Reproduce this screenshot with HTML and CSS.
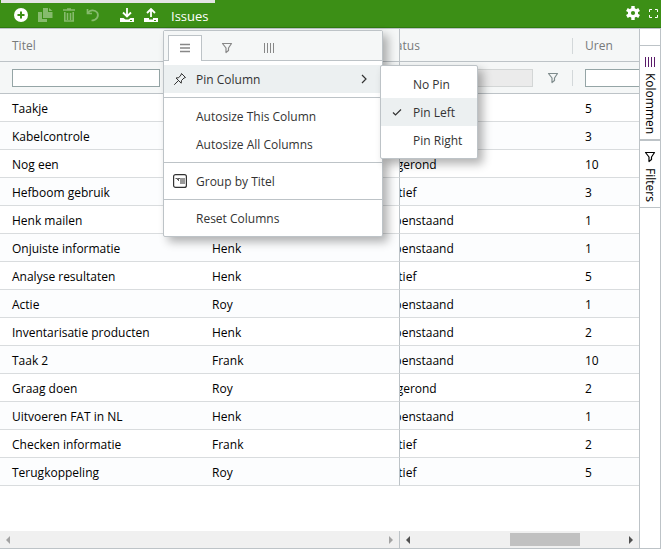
FILE: index.html
```html
<!DOCTYPE html>
<html lang="nl">
<head>
    <meta charset="UTF-8">
    <meta name="viewport" content="width=device-width, initial-scale=1.0">
    <title>Issues</title>
    <link rel="stylesheet" href="styles.css">
</head>
<body>
    <svg class="defs" width="0" height="0">
        <symbol id="filter" viewBox="0 0 12 12"><path d="M1.5 1.5h9L7.5 6v2.5L5 10.5V6z" fill="none" stroke="currentColor" stroke-width="1.2" stroke-linejoin="round"/></symbol>
        <symbol id="columns" viewBox="0 0 12 12"><path d="M1.5 1v10M4.5 1v10M7.5 1v10M10.5 1v10" stroke="currentColor"/></symbol>
    </svg>

    <header class="toolbar">
        <span class="progress"></span>
        <button type="button" class="tool" aria-label="Toevoegen">
            <svg width="14" height="14" viewBox="0 0 14 14"><circle cx="7" cy="7" r="7" fill="#fff"/><path d="M7 3.5v7M3.5 7h7" stroke="#3c8f16" stroke-width="2"/></svg>
        </button>
        <button type="button" class="tool" aria-label="Kopiëren" disabled>
            <svg width="15" height="14" viewBox="0 0 15 14" fill="currentColor"><path d="M0 4h4v7h5v3H0z"/><path d="M5 0h5v4h4.5v6H5z"/><path d="M11 0l3.5 3H11z"/></svg>
        </button>
        <button type="button" class="tool" aria-label="Verwijderen" disabled>
            <svg width="12" height="14" viewBox="0 0 12 14"><path d="M0 2h12M4 1h4" stroke="currentColor" stroke-width="1.6"/><path d="M1.8 4v9h8.4V4M4.5 5v7M7.5 5v7" fill="none" stroke="currentColor" stroke-width="1.6"/></svg>
        </button>
        <button type="button" class="tool" aria-label="Ongedaan maken" disabled>
            <svg width="14" height="14" viewBox="0 0 14 14" fill="none" stroke="currentColor" stroke-width="1.7"><path d="M1.500 1v4.500H6"/><path d="M2 5C4 1.500 9 1.500 11.200 4.500c2 3.500-.2 8-5.700 8"/></svg>
        </button>
        <button type="button" class="tool tool-wide" aria-label="Downloaden">
            <svg width="14" height="14" viewBox="0 0 14 14"><path d="M7 0v8M3 4.500l4 4 4-4" fill="none" stroke="#fff" stroke-width="1.8"/><path d="M0 10h3.500l2 1.500h3l2-1.500H14v4H0z" fill="#fff"/><path d="M10 12.500h2" stroke="#3c8f16"/></svg>
        </button>
        <button type="button" class="tool" aria-label="Uploaden">
            <svg width="14" height="14" viewBox="0 0 14 14"><path d="M7 9V1.500M3 5l4-4 4 4" fill="none" stroke="#fff" stroke-width="1.8"/><path d="M0 10h5v1.500h4V10h5v4H0z" fill="#fff"/><path d="M10 12.500h2" stroke="#3c8f16"/></svg>
        </button>
        <h1>Issues</h1>
        <div class="toolbar-right">
            <button type="button" aria-label="Instellingen">
                <svg width="14" height="14" viewBox="0 0 14 14"><path d="M7 0v14M.9 3.500l12.200 7M.9 10.500l12.200-7" stroke="#fff" stroke-width="3.400"/><circle cx="7" cy="7" r="3.600" fill="none" stroke="#fff" stroke-width="3"/><circle cx="7" cy="7" r="2.100" fill="#3c8f16"/></svg>
            </button>
            <button type="button" aria-label="Volledig scherm">
                <svg width="9" height="9" viewBox="0 0 9 9"><path d="M.5 3V.5H3M6 .5h2.500V3M8.500 6v2.500H6M3 8.500H.5V6" fill="none" stroke="#fff"/></svg>
            </button>
        </div>
    </header>

    <main class="grid">
        <section class="pane pane-pinned">
            <table>
                <thead>
                    <tr><th scope="col">Titel</th><td></td></tr>
                    <tr class="filters">
                        <td><input type="text" aria-label="Filter Titel"></td>
                        <td></td>
                    </tr>
                </thead>
                <tbody>
                    <tr><td>Taakje</td><td></td></tr>
                    <tr><td>Kabelcontrole</td><td></td></tr>
                    <tr><td>Nog een</td><td></td></tr>
                    <tr><td>Hefboom gebruik</td><td></td></tr>
                    <tr><td>Henk mailen</td><td></td></tr>
                    <tr><td>Onjuiste informatie</td><td>Henk</td></tr>
                    <tr><td>Analyse resultaten</td><td>Henk</td></tr>
                    <tr><td>Actie</td><td>Roy</td></tr>
                    <tr><td>Inventarisatie producten</td><td>Henk</td></tr>
                    <tr><td>Taak 2</td><td>Frank</td></tr>
                    <tr><td>Graag doen</td><td>Roy</td></tr>
                    <tr><td>Uitvoeren FAT in NL</td><td>Henk</td></tr>
                    <tr><td>Checken informatie</td><td>Frank</td></tr>
                    <tr><td>Terugkoppeling</td><td>Roy</td></tr>
                </tbody>
            </table>
            <div class="scrollbar scrollbar-off">
                <span class="arrow arrow-left"></span>
                <span class="arrow arrow-right"></span>
            </div>
        </section>

        <section class="pane pane-center">
            <table>
                <thead>
                    <tr><th scope="col"><div class="split">Status</div></th><th scope="col">Uren</th></tr>
                    <tr class="filters">
                        <td>
                            <div class="split">
                                <input type="text" aria-label="Filter Status" disabled>
                                <button type="button" class="filter-button" aria-label="Filter"><svg width="12" height="12"><use href="#filter"/></svg></button>
                            </div>
                        </td>
                        <td><input type="text" aria-label="Filter Uren"></td>
                    </tr>
                </thead>
                <tbody>
                    <tr><td></td><td>5</td></tr>
                    <tr><td></td><td>3</td></tr>
                    <tr><td>Afgerond</td><td>10</td></tr>
                    <tr><td>Actief</td><td>3</td></tr>
                    <tr><td>Openstaand</td><td>1</td></tr>
                    <tr><td>Openstaand</td><td>1</td></tr>
                    <tr><td>Actief</td><td>5</td></tr>
                    <tr><td>Openstaand</td><td>1</td></tr>
                    <tr><td>Openstaand</td><td>2</td></tr>
                    <tr><td>Openstaand</td><td>10</td></tr>
                    <tr><td>Afgerond</td><td>2</td></tr>
                    <tr><td>Openstaand</td><td>1</td></tr>
                    <tr><td>Actief</td><td>2</td></tr>
                    <tr><td>Actief</td><td>5</td></tr>
                </tbody>
            </table>
            <div class="scrollbar">
                <span class="arrow arrow-left"></span>
                <span class="thumb"></span>
                <span class="arrow arrow-right"></span>
            </div>
        </section>

        <aside class="sidebar">
            <button type="button"><svg width="12" height="12" class="purple"><use href="#columns"/></svg>Kolommen</button>
            <button type="button"><svg width="12" height="12"><use href="#filter"/></svg>Filters</button>
        </aside>
    </main>

    <div class="menu column-menu">
        <div class="menu-tabs">
            <button type="button" class="active" aria-label="Algemeen"><svg width="12" height="12" viewBox="0 0 12 12"><path d="M1 2.500h10M1 6h10M1 9.500h10" stroke="currentColor" stroke-width="1.500"/></svg></button>
            <button type="button" aria-label="Filter"><svg width="12" height="12"><use href="#filter"/></svg></button>
            <button type="button" aria-label="Kolommen"><svg width="12" height="12"><use href="#columns"/></svg></button>
        </div>
        <div class="menu-list">
            <button type="button" class="option active">
                <span class="option-icon"><svg width="14" height="14" viewBox="0 0 14 14" fill="none" stroke="currentColor" stroke-linejoin="round"><path d="M8.500 1.500l4 4-1.500.5-2.500 2.500-.3 2.700L3 6l2.700-.3L8 3z"/><path d="M5.200 8.800L1.500 12.500" stroke-linecap="round"/></svg></span>
                <span class="label">Pin Column</span>
                <svg class="chevron" width="8" height="10" viewBox="0 0 8 10"><path d="M2 1l4 4-4 4" fill="none" stroke="currentColor" stroke-width="1.200"/></svg>
            </button>
            <hr>
            <button type="button" class="option"><span class="option-icon"></span><span class="label">Autosize This Column</span></button>
            <button type="button" class="option"><span class="option-icon"></span><span class="label">Autosize All Columns</span></button>
            <hr>
            <button type="button" class="option">
                <span class="option-icon"><svg width="14" height="14" viewBox="0 0 14 14" fill="none" stroke="currentColor"><rect x=".6" y=".6" width="12.800" height="12.800" rx="2" stroke-width="1.200"/><path d="M2.500 4.500h2v1.500M5.500 4v3" stroke-width=".8"/><path d="M6 4.500h6M7 9.500h5" stroke-width=".8"/><path d="M9.500 4v6" stroke="#999" stroke-width="5"/></svg></span>
                <span class="label">Group by Titel</span>
            </button>
            <hr>
            <button type="button" class="option"><span class="option-icon"></span><span class="label">Reset Columns</span></button>
        </div>
    </div>

    <div class="menu pin-menu">
        <div class="menu-list">
            <button type="button" class="option"><span class="option-icon"></span><span class="label">No Pin</span></button>
            <button type="button" class="option active">
                <span class="option-icon"><svg width="10" height="10" viewBox="0 0 10 10"><path d="M1 5.500l2.500 2.500L9 2.500" fill="none" stroke="currentColor" stroke-width="1.200"/></svg></span>
                <span class="label">Pin Left</span>
            </button>
            <button type="button" class="option"><span class="option-icon"></span><span class="label">Pin Right</span></button>
        </div>
    </div>
</body>
</html>
```

FILE: styles.css
```css
* {
    box-sizing: border-box;
}
body {
    margin: 0;
    height: 100vh;
    display: flex;
    flex-direction: column;
    font-family: "Open Sans", "Noto Sans", sans-serif;
    font-size: 12px;
    line-height: 16px;
    color: #000;
    background: #fff;
    overflow: hidden;
}
button {
    padding: 0;
    border: none;
    background: none;
    font: inherit;
    color: inherit;
    cursor: pointer;
}
svg {
    display: block;
}
.defs {
    position: absolute;
}

/* toolbar */
.toolbar {
    position: relative;
    flex: none;
    display: flex;
    align-items: center;
    height: 28px;
    padding: 3px 3px 0 9px;
    background: #3c8f16;
    border-bottom: 1px solid #2f7a10;
    color: #fff;
}
.progress {
    position: absolute;
    top: 0;
    left: 1px;
    width: 214px;
    height: 3px;
    background: #e4e4e4;
}
.tool {
    width: 24px;
    display: flex;
    justify-content: center;
}
.tool:disabled {
    color: #86bb6d;
}
.tool-wide {
    margin-left: 10px;
}
.toolbar h1 {
    margin: 0 0 0 8px;
    padding-top: 2px;
    font-size: 13px;
    font-weight: normal;
}
.toolbar-right {
    margin-left: auto;
    display: flex;
    align-items: center;
    gap: 9px;
    padding-bottom: 4px;
}

/* grid */
.grid {
    flex: 1;
    display: flex;
    min-height: 0;
    border-top: 1px solid #bdc3c7;
    border-bottom: 1px solid #bdc3c7;
}
.pane {
    display: flex;
    flex-direction: column;
    overflow: hidden;
}
.pane-pinned {
    flex: none;
}
.pane-center {
    flex: 1;
}
.pane-center table {
    margin-left: -27px;
}
table {
    width: 400px;
    table-layout: fixed;
    border-collapse: separate;
    border-spacing: 0;
}
th, td {
    height: 28px;
    padding: 2px 0 0 12px;
    border-bottom: 1px solid #d9dcde;
    text-align: left;
    font-weight: normal;
    white-space: nowrap;
}
.pane-pinned tr > :last-child {
    border-right: 1px solid #bdc3c7;
}
thead th, thead td {
    height: 33px;
    background: #f5f7f7;
    border-color: #bdc3c7;
    color: #777a7a;
}
.filters td {
    height: 32px;
    padding-top: 0;
}
tbody tr:nth-child(even) {
    background: #fcfdfe;
}
td input {
    display: block;
    width: 148px;
    height: 18px;
    padding: 0 4px;
    border: 1px solid #95a5a6;
    background: #fff;
    font: inherit;
}
td input:disabled {
    border-color: #d3d6d6;
    background: #ebebeb;
}
.split {
    display: flex;
    align-items: center;
    height: 16px;
    border-right: 1px solid #d3d8da;
}
.filter-button {
    margin-left: 14px;
    color: #7f8c8d;
}

.scrollbar {
    display: flex;
    align-items: center;
    height: 17px;
    margin-top: auto;
    padding: 0 6px;
    background: #f0f0f0;
    color: #505050;
}
.scrollbar-off {
    border-right: 1px solid #bdc3c7;
    color: #a3a3a3;
}
.arrow {
    border: 4px solid transparent;
}
.arrow-left {
    border-left-width: 0;
    border-right-color: currentColor;
}
.arrow-right {
    margin-left: auto;
    border-right-width: 0;
    border-left-color: currentColor;
}
.thumb {
    width: 31%;
    height: 13px;
    margin-left: 44%;
    background: #c1c1c1;
}

/* side bar */
.sidebar {
    flex: none;
    width: 22px;
    padding-top: 16px;
    border: solid #bdc3c7;
    border-width: 0 1px;
}
.sidebar button {
    display: flex;
    align-items: center;
    gap: 5px;
    width: 20px;
    padding: 10px 0 5px;
    border: solid #bdc3c7;
    border-width: 1px 0;
    writing-mode: vertical-rl;
}
.purple {
    color: #5a1a6a;
}

/* menus */
.menu {
    position: absolute;
    background: #fff;
    border: 1px solid #bdc3c7;
    border-radius: 2px;
    box-shadow: 5px 5px 10px rgba(0, 0, 0, 0.3);
    color: #333;
}
.column-menu {
    top: 30px;
    left: 163px;
    width: 220px;
}
.pin-menu {
    top: 65px;
    left: 380px;
    width: 98px;
}
.menu-tabs {
    display: flex;
    gap: 8px;
    height: 30px;
    padding: 4px 4px 0;
    background: #f5f7f7;
    border-bottom: 1px solid #bdc3c7;
    color: #888;
}
.menu-tabs button {
    display: flex;
    align-items: center;
    justify-content: center;
    width: 34px;
    height: 26px;
    padding-bottom: 2px;
    border: 1px solid transparent;
    border-bottom: none;
}
.menu-tabs .active {
    background: #fff;
    border-color: #bdc3c7;
}
.menu-list {
    padding: 4px 0;
}
.option {
    display: flex;
    align-items: center;
    width: 100%;
    height: 28px;
    text-align: left;
}
.option.active {
    background: #ecf0f1;
}
.option-icon {
    display: flex;
    justify-content: center;
    width: 32px;
}
.label {
    padding-top: 2px;
}
.chevron {
    margin-left: auto;
    margin-right: 14px;
}
.menu hr {
    height: 1px;
    margin: 4px 0;
    border: none;
    background: #bdc3c7;
}
```
